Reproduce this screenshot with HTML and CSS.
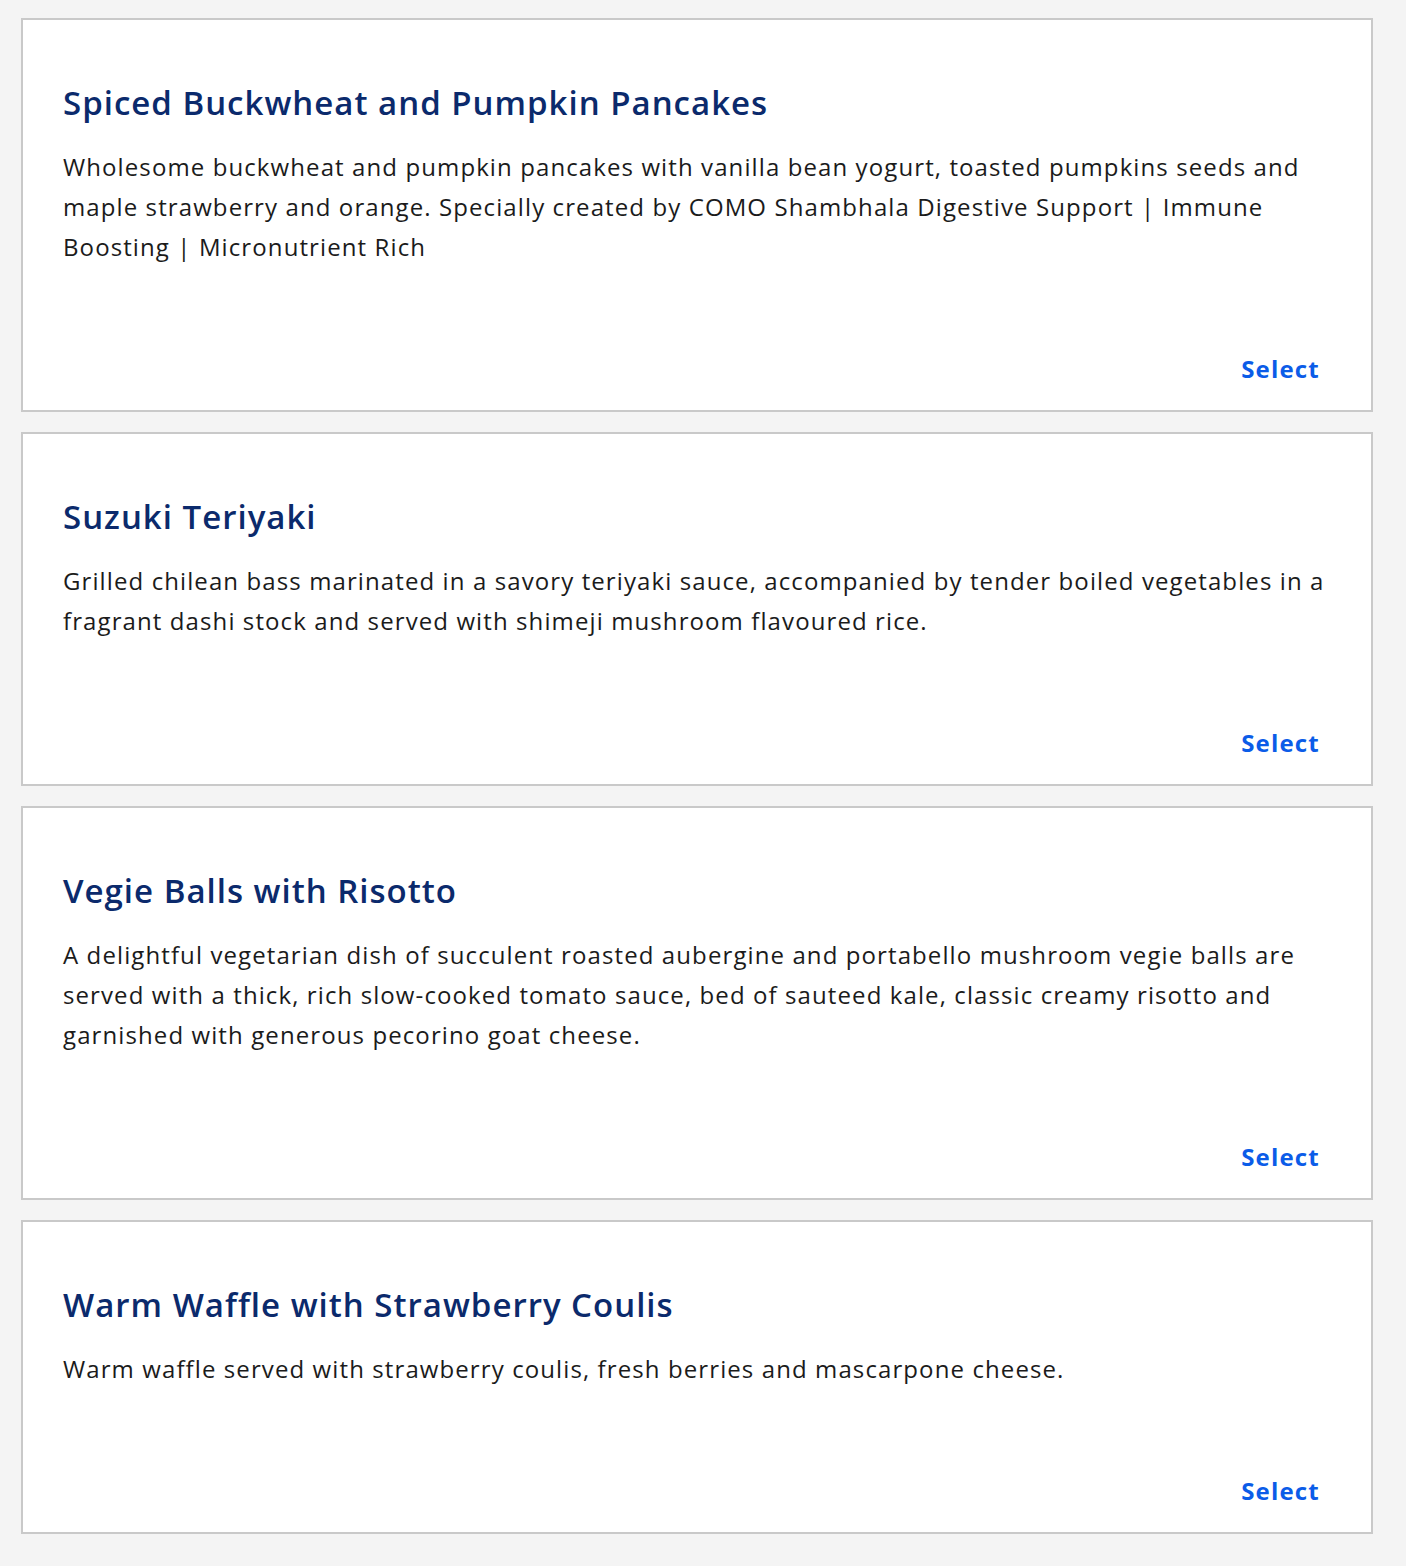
FILE: index.html
```html
<!DOCTYPE html>
<html lang="en">
<head>
<meta charset="utf-8">
<title>Menu</title>
<link rel="stylesheet" href="styles.css">
</head>
<body>
<main class="list">
  <section class="card">
    <h2 class="card-title">Spiced Buckwheat and Pumpkin Pancakes</h2>
    <p class="card-desc">Wholesome buckwheat and pumpkin pancakes with vanilla bean yogurt, toasted pumpkins seeds and maple strawberry and orange. Specially created by COMO Shambhala Digestive Support | Immune Boosting | Micronutrient Rich</p>
    <div class="card-actions"><a class="select" href="#">Select</a></div>
  </section>
  <section class="card">
    <h2 class="card-title">Suzuki Teriyaki</h2>
    <p class="card-desc">Grilled chilean bass marinated in a savory teriyaki sauce, accompanied by tender boiled vegetables in a fragrant dashi stock and served with shimeji mushroom flavoured rice.</p>
    <div class="card-actions"><a class="select" href="#">Select</a></div>
  </section>
  <section class="card">
    <h2 class="card-title">Vegie Balls with Risotto</h2>
    <p class="card-desc">A delightful vegetarian dish of succulent roasted aubergine and portabello mushroom vegie balls are served with a thick, rich slow-cooked tomato sauce, bed of sauteed kale, classic creamy risotto and garnished with generous pecorino goat cheese.</p>
    <div class="card-actions"><a class="select" href="#">Select</a></div>
  </section>
  <section class="card">
    <h2 class="card-title">Warm Waffle with Strawberry Coulis</h2>
    <p class="card-desc">Warm waffle served with strawberry coulis, fresh berries and mascarpone cheese.</p>
    <div class="card-actions"><a class="select" href="#">Select</a></div>
  </section>
</main>
</body>
</html>
```
FILE: styles.css
```css
html, body {
  margin: 0;
  padding: 0;
  background: #f4f4f4;
  font-family: "Open Sans", "Noto Sans", sans-serif;
}

.list {
  display: flex;
  flex-direction: column;
  gap: 20px;
  padding: 18px 33px 32px 21px;
}

.card {
  background: #ffffff;
  border: 2px solid #c9c9c9;
  padding: 63px 40px 21px 40px;
}

.card-title {
  margin: 0;
  font-size: 33px;
  line-height: 40px;
  font-weight: 600;
  letter-spacing: 1px;
  color: #0b2a6c;
}

.card-desc {
  margin: 24px 0 0;
  font-size: 24px;
  line-height: 40px;
  letter-spacing: 1.1px;
  color: #1b1b1b;
}

.card-actions {
  display: flex;
  justify-content: flex-end;
  margin-top: 82px;
  padding-right: 12px;
}

.select {
  font-size: 24px;
  line-height: 40px;
  font-weight: 700;
  letter-spacing: 1.2px;
  margin-right: -1px;
  color: #0b5ce8;
  text-decoration: none;
}
```
